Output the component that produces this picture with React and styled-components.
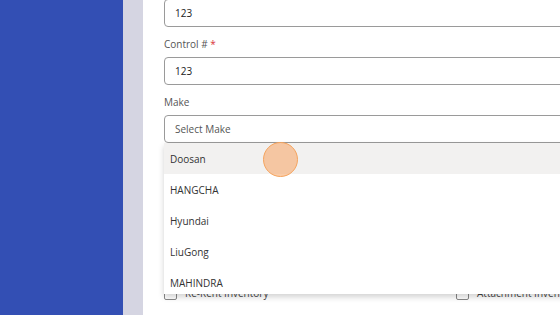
import React from "react";
import styled, { createGlobalStyle } from "styled-components";

const Global = createGlobalStyle`
  html, body { margin: 0; padding: 0; background: #fff; }
  body { font-family: "Open Sans", "Noto Sans", sans-serif; overflow: hidden; }
  * { box-sizing: border-box; }
`;

const Page = styled.div`
  display: grid;
  grid-template-columns: 123px 20px 1fr;
  width: 560px;
  height: 315px;
  overflow: hidden;
`;

const Sidebar = styled.div`
  background: #334fb4;
`;

const Gutter = styled.div`
  background: #d5d5e2;
`;

const Content = styled.div`
  background: #fff;
  padding: 0 0 0 21px;
  overflow: hidden;
`;

const Form = styled.div`
  display: flex;
  flex-direction: column;
  margin-top: -1px;
  width: 520px;
`;

const Field = styled.div`
  display: flex;
  flex-direction: column;
  gap: 6px;
  margin-bottom: 11px;
  position: relative;
`;

const Label = styled.label`
  font-size: 10px;
  line-height: 13px;
  height: 13px;
  color: #555;
`;

const Req = styled.span`
  color: #d9343a;
`;

const Input = styled.div`
  height: 28px;
  border: 1px solid #9a9a9a;
  border-radius: 4px;
  padding: 0 10px;
  display: flex;
  align-items: center;
  font-size: 10px;
  color: ${(p) => (p.$placeholder ? "#555" : "#222")};
  background: #fff;
`;

const Menu = styled.div`
  position: absolute;
  left: 0;
  right: 0;
  top: 47px;
  max-height: 151px;
  overflow: hidden;
  background: #fff;
  box-shadow: 0 3px 6px rgba(0, 0, 0, 0.18);
  z-index: 5;
  display: flex;
  flex-direction: column;
`;

const Option = styled.div`
  flex: none;
  height: 31px;
  padding: 0 6px;
  display: flex;
  align-items: center;
  font-size: 10px;
  color: #333;
  background: ${(p) => (p.$active ? "#f2f1f0" : "#fff")};
`;

const Checks = styled.div`
  display: grid;
  grid-template-columns: 292px 1fr;
  margin-top: 17px;
`;

const Check = styled.label`
  display: flex;
  align-items: center;
  gap: 8px;
  font-size: 10px;
  line-height: 13px;
  color: #444;
  white-space: nowrap;
`;

const Box = styled.span`
  width: 13px;
  height: 13px;
  flex: none;
  border: 1px solid #888;
  border-radius: 2px;
  background: #fff;
`;

const Cursor = styled.div`
  position: absolute;
  left: 99px;
  top: 46px;
  width: 35px;
  height: 35px;
  border-radius: 50%;
  background: rgba(246, 170, 110, 0.6);
  border: 1.5px solid #f5a45e;
  z-index: 6;
`;

const makes = ["Doosan", "HANGCHA", "Hyundai", "LiuGong", "MAHINDRA"];

export default function App() {
  return (
    <>
      <Global />
      <Page>
        <Sidebar />
        <Gutter />
        <Content>
          <Form>
            <Field>
              <Input>123</Input>
            </Field>
            <Field>
              <Label>
                Control # <Req>*</Req>
              </Label>
              <Input>123</Input>
            </Field>
            <Field>
              <Label>Make</Label>
              <Input $placeholder>Select Make</Input>
              <Menu>
                {makes.map((m, i) => (
                  <Option key={m} $active={i === 0}>
                    {m}
                  </Option>
                ))}
              </Menu>
              <Cursor />
            </Field>
            <Field aria-hidden="true">
              <Label />
              <Input />
            </Field>
            <Field aria-hidden="true">
              <Label />
              <Input />
            </Field>
            <Checks>
              <Check>
                <Box />
                Re-Rent Inventory
              </Check>
              <Check>
                <Box />
                Attachment Inventory
              </Check>
            </Checks>
          </Form>
        </Content>
      </Page>
    </>
  );
}
